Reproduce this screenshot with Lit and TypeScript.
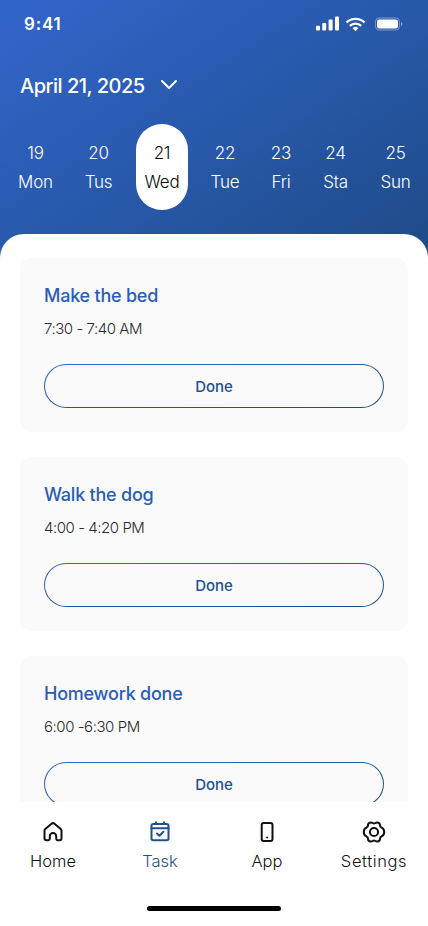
import { LitElement, html, css, svg } from "lit";
import { customElement, property } from "lit/decorators.js";
import { classMap } from "lit/directives/class-map.js";

interface Day { date: string; name: string; active?: boolean }
interface Task { title: string; time: string }

const DAYS: Day[] = [
  { date: "19", name: "Mon" },
  { date: "20", name: "Tus" },
  { date: "21", name: "Wed", active: true },
  { date: "22", name: "Tue" },
  { date: "23", name: "Fri" },
  { date: "24", name: "Sta" },
  { date: "25", name: "Sun" },
];

const TASKS: Task[] = [
  { title: "Make the bed", time: "7:30 - 7:40 AM" },
  { title: "Walk the dog", time: "4:00 - 4:20 PM" },
  { title: "Homework done", time: "6:00 -6:30 PM" },
];

const ICONS = {
  home: svg`<path d="M3.500 10.700c0-.7.300-1.300.800-1.700l6.200-5.200a2.300 2.300 0 0 1 3 0l6.200 5.200c.5.4.8 1 .8 1.700V18.200a2 2 0 0 1-2 2h-1.600a1.700 1.700 0 0 1-1.700-1.700V16.200a3.200 3.200 0 0 0-6.400 0v2.300a1.700 1.700 0 0 1-1.700 1.700H5.500a2 2 0 0 1-2-2z"/>`,
  task: svg`<rect x="3.500" y="3.900" width="17" height="16.400" rx="1.800"/><path d="M3.500 8.200h17M8 2.300v1.600M16 2.300v1.600M9 13.500l2.400 2.300 4-4"/>`,
  app: svg`<rect x="6.700" y="3" width="10.800" height="18" rx="2"/><path d="M12.100 17.500v.1"/>`,
  settings: svg`<circle cx="12" cy="12" r="4.100"/><path d="M12 3.600C13.200 3.600 13.700 2.200 15.300 2.400C17.300 2.700 18.100 3.700 18 5.200C18 6.600 18.400 7 19.600 7.600C21.300 8.300 22.200 9.400 22.200 12C22.200 14.600 21.300 15.700 19.600 16.400C18.400 17 18 17.400 18 18.800C18.100 20.300 17.300 21.300 15.300 21.600C13.700 21.800 13.200 20.400 12 20.400C10.800 20.400 10.300 21.800 8.700 21.600C6.700 21.300 5.900 20.300 6 18.800C6 17.400 5.600 17 4.400 16.400C2.700 15.700 1.800 14.600 1.800 12C1.800 9.400 2.700 8.300 4.400 7.600C5.600 7 6 6.600 6 5.200C5.900 3.700 6.700 2.700 8.700 2.400C10.300 2.200 10.800 3.600 12 3.600Z"/>`,
};

@customElement("task-card")
class TaskCard extends LitElement {
  @property() heading = "";
  @property() time = "";

  static styles = css`
    :host { display: block; height: 174px; box-sizing: border-box; padding: 24px; border-radius: 12px; background: #fafafa; flex: none; }
    .title { margin: 0; font-size: 18px; line-height: 27px; font-weight: 500; color: #2a5db8; letter-spacing: -0.23px; white-space: nowrap; }
    .time { margin: 8px 0 0; font-size: 15px; line-height: 24px; font-weight: 300; color: #2b2b2b; letter-spacing: -0.45px; white-space: nowrap; }
    .done { display: block; width: 100%; height: 44px; margin-top: 23px; padding: 1px 0 0; border: 1px solid transparent; border-radius: 22px;
      background: linear-gradient(#fafafa, #fafafa) padding-box, linear-gradient(to bottom right, #3366cc, #1d4a85) border-box;
      font: 500 15px/41px Inter, sans-serif; color: #23508f; }
  `;

  render() {
    return html`
      <h2 class="title">${this.heading}</h2>
      <p class="time">${this.time}</p>
      <button class="done">Done</button>
    `;
  }
}

@customElement("nav-item")
class NavItem extends LitElement {
  @property() label = "";
  @property() icon: keyof typeof ICONS = "home";

  static styles = css`
    :host { display: flex; flex-direction: column; align-items: center; color: #111; }
    svg { display: block; width: 24px; height: 24px; fill: none; stroke: currentColor; stroke-width: 2; stroke-linecap: round; stroke-linejoin: round; }
    .label { margin-top: 5px; font-size: 16.500px; line-height: 24px; font-weight: 300; letter-spacing: var(--label-spacing, 0); white-space: nowrap; }
  `;

  render() {
    return html`
      <svg viewBox="0 0 24 24">${ICONS[this.icon]}</svg>
      <span class="label">${this.label}</span>
    `;
  }
}

@customElement("app-root")
class AppRoot extends LitElement {
  static styles = css`
    :host { display: flex; flex-direction: column; width: 428px; height: 926px; overflow: hidden; font-family: Inter, sans-serif;
      background: linear-gradient(to bottom right, #3366cc, #1d4a85) top / 100% 282px no-repeat #fff; }
    .status { display: flex; align-items: center; height: 47px; padding: 0 25px 0 24px; color: #fff; flex: none; }
    .clock { flex: 1; font-size: 17px; font-weight: 600; letter-spacing: 0.8px; }
    .status svg { display: block; width: 88px; height: 16px; }
    .month { display: flex; align-items: center; gap: 14px; height: 30px; margin: 24px 20px 0; color: #fff; flex: none; }
    .month h1 { margin: 0; font-size: 20px; line-height: 30px; font-weight: 500; letter-spacing: -0.5px; white-space: nowrap; }
    .month svg { display: block; width: 20px; height: 20px; }
    .days { display: grid; grid-template-columns: 63px 63px 64px 62px 50px 59px 61px; justify-items: center; height: 86px; margin: 23px 2px 0 4px; flex: none; }
    .day { display: flex; flex-direction: column; align-items: center; justify-content: center; gap: 3px; width: 52px; height: 86px; border-radius: 26px;
      color: #fff; font-size: 17px; line-height: 26px; font-weight: 300; letter-spacing: -0.2px; }
    .active { background: #fff; color: #0a0a0a; }
    .sheet { display: flex; flex-direction: column; gap: 25px; height: 568px; box-sizing: border-box; margin-top: 24px; padding: 24px 20px 0; overflow: hidden;
      border-radius: 24px 24px 0 0; background: #fff; flex: none; }
    .nav { display: grid; grid-template-columns: 106px 108px 106px 108px; height: 124px; box-sizing: border-box; padding-top: 18px; background: #fff; position: relative; flex: none; }
    .current { color: #23508f; }
    .wide { --label-spacing: 0.6px; }
    .indicator { position: absolute; left: 147px; bottom: 15px; width: 134px; height: 5px; border-radius: 3px; background: #000; }
  `;

  render() {
    return html`
      <div class="status">
        <span class="clock">9:41</span>
        <svg viewBox="0 0 88 16" fill="#fff">
          <rect x="1" y="9.800" width="4" height="4.700" rx="1"/>
          <rect x="7.200" y="7" width="4" height="7.500" rx="1"/>
          <rect x="13.600" y="3.500" width="4" height="11" rx="1"/>
          <rect x="20" y="0.500" width="4" height="14" rx="1"/>
          <g fill="none" stroke="#fff" stroke-width="2.300">
            <path d="M31.500 6.500a13 13 0 0 1 18 0"/>
            <path d="M34.800 9.900a8.200 8.200 0 0 1 11.400 0"/>
          </g>
          <path d="M37.600 12.200a4.200 4.200 0 0 1 5.800 0l-2.500 2.500a.6.6 0 0 1-.8 0z"/>
          <rect x="60.400" y="2" width="24" height="12" rx="3.600" fill="none" stroke="#fff" stroke-opacity=".4"/>
          <rect x="62" y="3.500" width="21" height="9" rx="2.300"/>
          <path d="M86 6v4.200c.8-.4 1.400-1.200 1.400-2.100S86.800 6.400 86 6z" fill-opacity=".45"/>
        </svg>
      </div>
      <div class="month">
        <h1>April 21, 2025</h1>
        <svg viewBox="0 0 20 20" fill="none" stroke="#fff" stroke-width="2" stroke-linecap="round" stroke-linejoin="round"><path d="M3 5l7 7 7-7"/></svg>
      </div>
      <div class="days">
        ${DAYS.map((d) => html`<div class=${classMap({ day: true, active: !!d.active })}><span>${d.date}</span><span>${d.name}</span></div>`)}
      </div>
      <main class="sheet">
        ${TASKS.map((t) => html`<task-card .heading=${t.title} .time=${t.time}></task-card>`)}
      </main>
      <nav class="nav">
        <nav-item label="Home" icon="home"></nav-item>
        <nav-item class="current" label="Task" icon="task"></nav-item>
        <nav-item label="App" icon="app"></nav-item>
        <nav-item class="wide" label="Settings" icon="settings"></nav-item>
        <div class="indicator"></div>
      </nav>
    `;
  }
}
